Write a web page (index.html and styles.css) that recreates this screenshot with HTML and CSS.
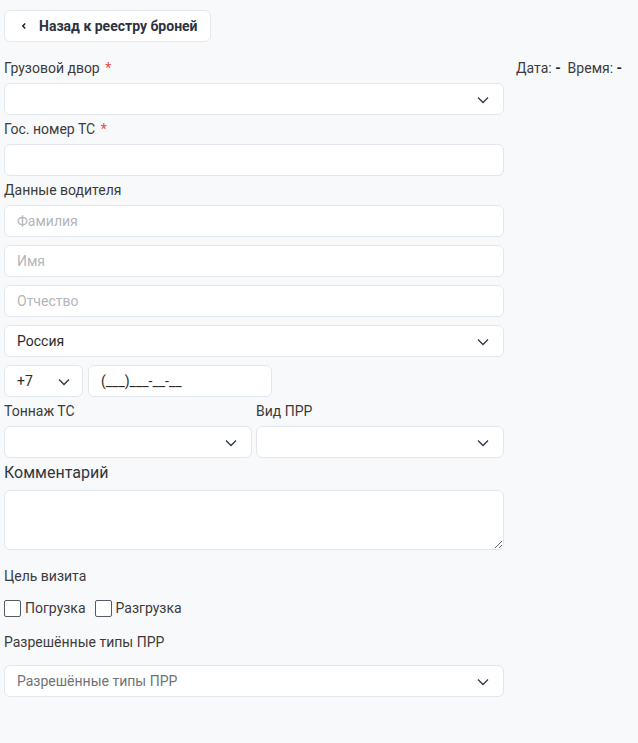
FILE: index.html
```html
<!DOCTYPE html>
<html lang="ru">
<head>
<meta charset="utf-8">
<link rel="stylesheet" href="styles.css">
</head>
<body>
<div class="page">
  <button class="back-btn"><span class="back-ico"><svg width="8" height="8" viewBox="0 0 8 8"><path d="M5.2 1.5 L2.8 4 L5.2 6.5" fill="none" stroke="#1f2937" stroke-width="1.6"/></svg></span>Назад к реестру броней</button>
  <div class="layout">
    <div class="form">
      <div class="label">Грузовой двор <span class="req">*</span></div>
      <div class="field select"><span></span><svg class="chev" width="12" height="8" viewBox="0 0 12 8"><path d="M1 1.5 L6 6.5 L11 1.5" fill="none" stroke="#2d3748" stroke-width="1.3"/></svg></div>

      <div class="label">Гос. номер ТС <span class="req">*</span></div>
      <div class="field"></div>

      <div class="label">Данные водителя</div>
      <div class="stack">
        <div class="field placeholder">Фамилия</div>
        <div class="field placeholder">Имя</div>
        <div class="field placeholder">Отчество</div>
        <div class="field select"><span>Россия</span><svg class="chev" width="12" height="8" viewBox="0 0 12 8"><path d="M1 1.5 L6 6.5 L11 1.5" fill="none" stroke="#2d3748" stroke-width="1.3"/></svg></div>
        <div class="phone-row">
          <div class="field select code"><span>+7</span><svg class="chev" width="12" height="8" viewBox="0 0 12 8"><path d="M1 1.5 L6 6.5 L11 1.5" fill="none" stroke="#2d3748" stroke-width="1.3"/></svg></div>
          <div class="field phone">(___)___-__-__</div>
        </div>
      </div>

      <div class="two-col">
        <div class="col">
          <div class="label">Тоннаж ТС</div>
          <div class="field select"><span></span><svg class="chev" width="12" height="8" viewBox="0 0 12 8"><path d="M1 1.5 L6 6.5 L11 1.5" fill="none" stroke="#2d3748" stroke-width="1.3"/></svg></div>
        </div>
        <div class="col">
          <div class="label">Вид ПРР</div>
          <div class="field select"><span></span><svg class="chev" width="12" height="8" viewBox="0 0 12 8"><path d="M1 1.5 L6 6.5 L11 1.5" fill="none" stroke="#2d3748" stroke-width="1.3"/></svg></div>
        </div>
      </div>

      <div class="label big">Комментарий</div>
      <textarea class="textarea"></textarea>

      <div class="label visit">Цель визита</div>
      <div class="checks">
        <label class="check"><span class="box"></span>Погрузка</label>
        <label class="check"><span class="box"></span>Разгрузка</label>
      </div>

      <div class="label allowed">Разрешённые типы ПРР</div>
      <div class="field select placeholder2"><span>Разрешённые типы ПРР</span><svg class="chev" width="12" height="8" viewBox="0 0 12 8"><path d="M1 1.5 L6 6.5 L11 1.5" fill="none" stroke="#2d3748" stroke-width="1.3"/></svg></div>
    </div>
    <div class="meta">Дата: <b>-</b>&nbsp; Время: <b>-</b></div>
  </div>
</div>
</body>
</html>
```

FILE: styles.css
```css
* { box-sizing: border-box; }
html, body { margin: 0; padding: 0; }
body {
  background: #f8f9fb;
  font-family: Roboto, "Noto Sans", Arial, sans-serif;
  color: #3c3c3c;
  font-size: 14px;
  width: 638px;
  height: 743px;
}
.page { padding: 10px 4px 0 4px; }
.back-btn {
  display: flex;
  align-items: center;
  height: 32px;
  width: 207px;
  padding: 0 0 0 15px;
  background: #fff;
  border: 1px solid #e4e8ef;
  border-radius: 6px;
  font-family: Roboto, sans-serif;
  font-weight: 700;
  font-size: 14px;
  color: #2d3341;
}
.back-ico { display: inline-flex; width: 8px; margin-right: 11px; }
.layout { display: flex; gap: 12px; margin-top: 16px; }
.form { width: 500px; display: flex; flex-direction: column; }
.meta { font-size: 14px; color: #3c3c3c; line-height: 20px; white-space: nowrap; }
.meta b { color: #222; }
.label { line-height: 20px; height: 20px; margin-bottom: 5px; color: #3c3c3c; }
.req { color: #f04848; margin-left: 2px; }
.field {
  height: 32px;
  background: #fff;
  border: 1px solid #e2e6ee;
  border-radius: 6px;
  display: flex;
  align-items: center;
  padding: 0 12px;
  font-size: 14px;
  color: #2b2b2b;
}
.field + .label { margin-top: 4px; }
.select { justify-content: space-between; }
.select .chev { margin-right: 2px; margin-top: 2px; }
.placeholder { color: #b3b6bb; }
.placeholder2 { color: #6f7378; }
.stack { display: flex; flex-direction: column; gap: 8px; }
.stack + .two-col { margin-top: 4px; }
.phone-row { display: flex; gap: 5px; }
.code { width: 79px; padding: 0 10px 0 12px; }
.phone { width: 184px; padding-left: 12px; }
.two-col { display: grid; grid-template-columns: 1fr 1fr; gap: 4px; }
.col { display: flex; flex-direction: column; }
.label.big { font-size: 16px; margin-top: 5px; margin-bottom: 7px; color: #33373d; }
.textarea {
  height: 60px;
  width: 100%;
  background: #fff;
  border: 1px solid #e2e6ee;
  border-radius: 6px;
  resize: vertical;
  display: block;
  font-family: Roboto, sans-serif;
}
.label.visit { margin-top: 16px; margin-bottom: 10px; }
.checks { display: flex; gap: 9px; height: 24px; align-items: center; }
.check { display: flex; align-items: center; gap: 4px; color: #3c3c3c; }
.box {
  width: 17px; height: 17px;
  border: 1.5px solid #555b63;
  border-radius: 2px;
  background: #fff;
}
.label.allowed { margin-top: 12px; margin-bottom: 13px; }
```
